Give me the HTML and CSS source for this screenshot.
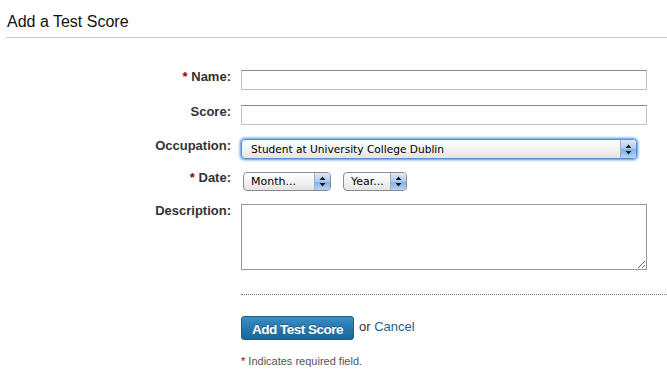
FILE: index.html
```html
<!DOCTYPE html>
<html lang="en">
<head>
<meta charset="utf-8">
<title>Add a Test Score</title>
<link rel="stylesheet" href="styles.css">
</head>
<body>
<div class="page">
  <h1 class="title">Add a Test Score</h1>
  <form class="form">
    <div class="row row-name">
      <label class="label"><span class="req">*</span> Name:</label>
      <input class="text" type="text">
    </div>
    <div class="row row-score">
      <label class="label">Score:</label>
      <input class="text" type="text">
    </div>
    <div class="row row-occ">
      <label class="label">Occupation:</label>
      <div class="select select-occ focused">
        <span class="select-value">Student at University College Dublin</span>
        <span class="arrows"><svg width="7" height="11" viewBox="0 0 7 11"><path d="M3.5 0.5 L6.5 4 L0.5 4 Z M0.5 7 L6.5 7 L3.5 10.5 Z" fill="#1b1b1b"/></svg></span>
      </div>
    </div>
    <div class="row row-date">
      <label class="label label-date"><span class="req">*</span> Date:</label>
      <div class="dates">
        <div class="select select-month">
          <span class="select-value">Month...</span>
          <span class="arrows"><svg width="7" height="11" viewBox="0 0 7 11"><path d="M3.5 0.5 L6.5 4 L0.5 4 Z M0.5 7 L6.5 7 L3.5 10.5 Z" fill="#1b1b1b"/></svg></span>
        </div>
        <div class="select select-year">
          <span class="select-value">Year...</span>
          <span class="arrows"><svg width="7" height="11" viewBox="0 0 7 11"><path d="M3.5 0.5 L6.5 4 L0.5 4 Z M0.5 7 L6.5 7 L3.5 10.5 Z" fill="#1b1b1b"/></svg></span>
        </div>
      </div>
    </div>
    <div class="row row-desc">
      <label class="label">Description:</label>
      <textarea class="textarea"></textarea>
    </div>
    <div class="divider"></div>
    <div class="actions">
      <button class="btn" type="button">Add Test Score</button>
      <span class="or">or <a class="cancel" href="#">Cancel</a></span>
    </div>
    <p class="note"><span class="req">*</span> Indicates required field.</p>
  </form>
</div>
</body>
</html>
```

FILE: styles.css
```css
html, body {
  margin: 0;
  padding: 0;
  background: #fff;
}
body {
  font-family: "Liberation Sans", Arial, sans-serif;
  color: #333;
}
.page {
  padding-left: 6px;
}
.title {
  margin: 0;
  padding: 12px 0 5px 1px;
  font-size: 16px;
  line-height: 20px;
  font-weight: normal;
  color: #111;
  border-bottom: 1px solid #cccccc;
}
.form {
  margin: 32px 0 0 0;
}
.row {
  display: flex;
  align-items: flex-start;
  gap: 10px;
}
.row-name { margin-bottom: 15px; }
.row-score { margin-bottom: 14px; }
.row-occ { margin-bottom: 13px; }
.row-date { margin-bottom: 13px; }
.label {
  width: 225px;
  flex: none;
  text-align: right;
  font-size: 13px;
  font-weight: bold;
  line-height: 16px;
  margin-top: -1px;
  color: #333;
}
.label-date { margin-top: -2px; }
.req {
  color: #990000;
}
.text {
  box-sizing: border-box;
  width: 406px;
  height: 20px;
  margin: 0;
  padding: 0 3px;
  border: 1px solid #c2c2c2;
  border-top-color: #8a8a8a;
  background: #fff;
  outline: none;
}
.select {
  box-sizing: border-box;
  display: flex;
  align-items: stretch;
  height: 20px;
  border: 1px solid #8c8c8c;
  border-radius: 4px;
  background: linear-gradient(#ffffff, #f3f3f3 50%, #e4e4e4);
  overflow: hidden;
  font-family: "DejaVu Sans", "Liberation Sans", sans-serif;
  font-size: 10.6px;
  color: #000;
}
.select-value {
  flex: 1;
  display: flex;
  align-items: center;
  padding-left: 9px;
  white-space: nowrap;
}
.arrows {
  flex: none;
  width: 15px;
  display: flex;
  align-items: center;
  justify-content: center;
  border-left: 1px solid #98acc6;
  background: linear-gradient(#dfeafa, #a9c9ee 50%, #7fb0e8 51%, #b5d4f5);
}
.select-occ {
  width: 396px;
  height: 20px;
  border-color: #5b8fcf;
  box-shadow: 0 0 0 1px #86b4ec, 0 0 2px 2px #a9cbf2;
}
.dates {
  display: flex;
  gap: 12px;
  padding-left: 2px;
}
.select-month {
  width: 88px;
  height: 19px;
}
.select-year {
  width: 64px;
  height: 19px;
}
.select-month .select-value,
.select-year .select-value {
  padding-left: 7px;
  font-size: 11px;
}
.textarea {
  box-sizing: border-box;
  width: 406px;
  height: 66px;
  margin: 0;
  border: 1px solid #999999;
  padding: 2px;
  outline: none;
  resize: both;
  font-family: "Liberation Sans", Arial, sans-serif;
  display: block;
}
.divider {
  margin: 24px 0 0 235px;
  border-top: 1px dotted #777;
}
.actions {
  display: flex;
  align-items: center;
  margin: 21px 0 0 235px;
}
.btn {
  box-sizing: border-box;
  width: 113px;
  height: 24px;
  padding: 0;
  margin: 0;
  border: 1px solid #1b5c8a;
  border-radius: 3px;
  background: linear-gradient(#3a8fc4, #2678ad 50%, #1d6699);
  color: #fff;
  font-family: "Liberation Sans", Arial, sans-serif;
  font-size: 13.5px;
  font-weight: bold;
  letter-spacing: -0.5px;
  line-height: 22px;
  padding-top: 2px;
  text-shadow: 0 -1px 0 rgba(0,0,0,0.25);
}
.or {
  margin-left: 5px;
  margin-top: -4px;
  font-size: 13px;
  color: #333;
}
.cancel {
  color: #1f5f92;
  text-decoration: none;
}
.note {
  margin: 14px 0 0 235px;
  font-size: 11px;
  line-height: 14px;
  color: #555;
}
```
